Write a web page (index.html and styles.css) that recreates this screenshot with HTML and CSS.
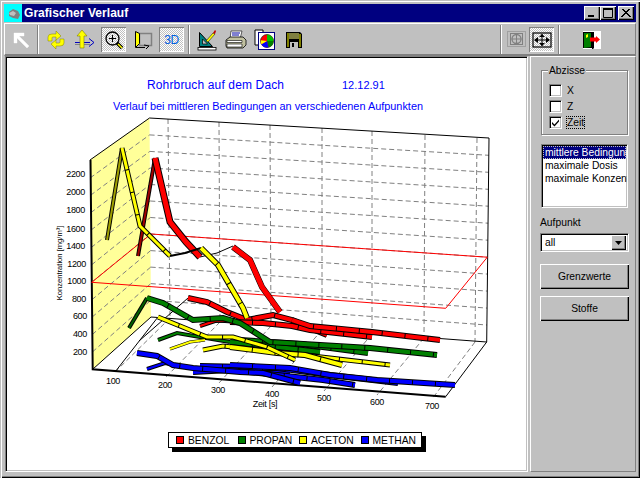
FILE: index.html
```html
<!DOCTYPE html>
<html lang="de">
<head>
<meta charset="utf-8">
<title>Grafischer Verlauf</title>
<link rel="stylesheet" href="styles.css">
</head>
<body>
<div class="window">
  <div class="titlebar">
    <svg class="appicon" width="18" height="18" viewBox="0 0 18 18"><rect width="18" height="18" fill="#00ffff"/><path d="M5 8l4-3 5 2 2 4-2 4-5-1-4-2z" fill="#808080"/><path d="M5 9l4-2 3 2-2 3-4-1z" fill="#c0c0c0"/></svg>
    <span class="title">Grafischer Verlauf</span>
    <div class="controls">
      <span class="ctl"><svg width="14" height="12" viewBox="0 0 14 12"><rect x="3" y="8" width="6" height="2" fill="#000"/></svg></span>
      <span class="ctl"><svg width="14" height="12" viewBox="0 0 14 12"><path d="M2.5 1.500h9v9h-9z" fill="none" stroke="#000"/><rect x="2" y="1" width="10" height="2" fill="#000"/></svg></span>
      <span class="ctl ctl-close"><svg width="14" height="12" viewBox="0 0 14 12"><path d="M3 2l8 8M4 2l8 8M11 2l-8 8M10 2l-8 8" stroke="#000" stroke-width="1"/></svg></span>
    </div>
  </div>

  <div class="toolbar">
    <span class="tb"><svg width="20" height="20" viewBox="0 0 20 20"><path d="M3 3h10v3H8l10 10-2 2L6 8v5H3z" fill="#fff" stroke="#fff" stroke-width=".4"/></svg></span>
    <span class="sep"></span>
    <span class="tb"><svg width="20" height="20" viewBox="0 0 20 20"><path d="M2 11V7q0-3 4-3h4V1l5 5-5 4V7H7q-1 0-1 1v3z" fill="#ffff00" stroke="#808000" stroke-width=".5"/><path d="M18 9v4q0 3-4 3h-4v3l-5-5 5-4v3h3q1 0 1-1V9z" fill="#ffff00" stroke="#808000" stroke-width=".5"/></svg></span>
    <span class="tb"><svg width="22" height="22" viewBox="0 0 22 22"><path d="M1 13.500h15M15 9.500l5 4-5 4" fill="none" stroke="#0000c0"/><path d="M1 15.500h15" stroke="#808080"/><path d="M8 1l5 6h-3v12H6V7H3z" fill="#ffff00" stroke="#808000" stroke-width=".6"/></svg></span>
    <span class="tb tb-on"><svg width="20" height="20" viewBox="0 0 20 20"><circle cx="8.500" cy="8.500" r="6.500" fill="none" stroke="#000" stroke-width="1.300"/><path d="M8.500 5v7M5 8.500h7" stroke="#000"/><path d="M13 13l5 5" stroke="#000" stroke-width="3.500"/><path d="M14 14l4 4" stroke="#ffff00" stroke-width="1.500"/></svg></span>
    <span class="tb"><svg width="20" height="20" viewBox="0 0 20 20"><path d="M6.500 3.500h12v12h-12z" fill="none" stroke="#808080" stroke-width="1.500"/><path d="M2.500 1.500l4 2v10l-4 4z" fill="#ffff00" stroke="#000"/><path d="M3 17.500h9" stroke="#000"/><path d="M11 15l5 1-3 3" fill="none" stroke="#000"/></svg></span>
    <span class="tb tb-on"><span class="three">3D</span></span>
    <span class="sep"></span>
    <span class="tb"><svg width="20" height="22" viewBox="0 0 20 22"><path d="M2.500 3.500v14h13z" fill="#008080" stroke="#000"/><path d="M5.500 10v5h5z" fill="#c0c0c0" stroke="#000" stroke-width=".7"/><path d="M9 12l7-8 2 1-7 8z" fill="#ffff00" stroke="#000" stroke-width=".5"/><path d="M16 4l2-3 1 1-1 3z" fill="#c00000"/><rect x="1" y="18.500" width="18" height="2.500" fill="#fff" stroke="#000" stroke-width=".8"/></svg></span>
    <span class="tb"><svg width="22" height="20" viewBox="0 0 22 20"><path d="M6 1h11l-2 8H5z" fill="#fff" stroke="#000" stroke-width=".6"/><path d="M7 3h8M7 5h7" stroke="#0000a0"/><path d="M1 10l4-3h13l3 3v5l-3 3H2l-1-2z" fill="#c0c0a0" stroke="#000" stroke-width=".8"/><path d="M2 10.500h15v2H2zM2 14h15v3H2z" fill="#fff" stroke="#000" stroke-width=".6"/></svg></span>
    <span class="tb"><svg width="22" height="22" viewBox="0 0 22 22"><path d="M1 1h8v15H1z" fill="#fff" stroke="#000"/><rect x="4.500" y="3.500" width="16" height="17" fill="#fff" stroke="#000080" stroke-width="1"/><circle cx="13" cy="12" r="6.500" fill="#ff0000" stroke="#000" stroke-width=".6"/><path d="M13 12V5.500a6.500 6.500 0 0 1 6.500 6.500z" fill="#00c000"/><path d="M13 12h6.500a6.500 6.500 0 0 1-5 6.300z" fill="#008000"/><path d="M13 12l1.500 6.300a6.500 6.500 0 0 1-7-3z" fill="#0000ff"/><path d="M13 12l-5.500 3.300a6.500 6.500 0 0 1-.8-4z" fill="#ffff00"/></svg></span>
    <span class="tb"><svg width="16" height="16" viewBox="0 0 16 16"><path d="M0 0h14l2 2v14H0z" fill="#000"/><rect x="3" y="1" width="10" height="6" fill="#808040"/><rect x="1" y="1" width="2" height="14" fill="#808000"/><rect x="13" y="2" width="2" height="13" fill="#808000"/><rect x="4" y="10" width="8" height="6" fill="#c0c0c0"/><rect x="6" y="11" width="2" height="4" fill="#000"/></svg></span>
    <span class="toolgap"></span>
    <span class="sep sep-tight"></span>
    <span class="tb tb-tight"><svg width="20" height="18" viewBox="0 0 20 18"><rect x=".5" y=".5" width="18" height="15" fill="none" stroke="#808080" stroke-dasharray="1 1"/><rect x="3.500" y="2.500" width="12" height="11" fill="none" stroke="#808080"/><circle cx="9.500" cy="8" r="4.500" fill="none" stroke="#808080" stroke-width="1.300"/><path d="M9.500 3v10M4.500 8h10" stroke="#808080"/></svg></span>
    <span class="tb tb-on"><svg width="20" height="16" viewBox="0 0 20 16"><rect x="1" y="1" width="18" height="14" fill="none" stroke="#000" stroke-width="1.200"/><path d="M10 2v12M3 8h14" stroke="#000"/><path d="M10 2l-3 3h6zM10 14l-3-3h6zM2 8l4-3v6zM18 8l-4-3v6z" fill="#000"/></svg></span>
    <span class="sep"></span>
    <span class="tb tb-door"><svg width="18" height="18" viewBox="0 0 18 18"><rect width="18" height="18" fill="#fff"/><rect x="0" y="1" width="11" height="16" fill="#000"/><path d="M1 2h7l0 14-7 1z" fill="#008000"/><path d="M3 4l2-1v3l-2 1z" fill="#ffff00"/><rect x="9" y="1" width="1.500" height="17" fill="#000"/><path d="M7 6.500h6V5l4 3.500-4 3.500v-1.500H7z" fill="#ff0000"/></svg></span>
  </div>

  <div class="main">
    <div class="chart">
      <svg class="plot" width="521" height="414" viewBox="7 58 521 414">
        <defs>
          <polyline id="r1" points="155,158 170,222 186,242 200,257"/>
          <polyline id="r1b" points="233,247 250,260 262,287 280,312"/>
          <polyline id="r2" points="188,298 207,302 227,312 247,320 273,315 292,320 310,328 327,335"/>
          <polyline id="r3" points="230,322 263,323 292,326 310,330 372,337"/>
          <polyline id="r4" points="292,320 310,326 372,332 440,340"/>
          <polyline id="r5" points="200,326 215,321 235,320"/>
          <polyline id="g1" points="147,298 163,303 193,320 223,318 240,323 270,342 320,345 370,348 437,355"/>
          <polyline id="g2" points="230,342 270,346 320,352"/>
          <polyline id="g3" points="240,340 300,344 368,353"/>
          <polyline id="g4" points="158,340 177,333 200,337 230,342"/>
          <polyline id="y1" points="122,148 140,226 170,256"/>
          <polyline id="y1b" points="201,248 218,265 243,308 247,318"/>
          <polyline id="y2" points="158,317 207,337 233,337 267,347 295,360"/>
          <polyline id="y3" points="170,349 190,342 205,340"/>
          <polyline id="y4" points="230,347 277,353 305,355 342,365"/>
          <polyline id="y5" points="203,350 223,346 277,352 330,358 390,365"/>
          <polyline id="b1" points="137,353 157,356 173,365 193,368 240,372 263,373 300,383"/>
          <polyline id="b2" points="147,369 165,363 180,366"/>
          <polyline id="b4" points="230,365 290,368 330,375 377,380 455,385"/>
          <polyline id="b5" points="193,372 230,370 277,375 323,380 355,385"/>
          <polyline id="b6" points="240,368 277,368 330,375 398,383"/>
          <polyline id="b7" points="200,366 250,367 290,372"/>
        </defs>

        <polygon class="wall" points="90,160 149.500,118 151,317 92.700,369.300"/>
        <g class="grid">
          <path d="M92.500 351.900L150.900 300.200M92.300 334.500L150.800 283.600M92.100 317.100L150.700 267.100M91.900 299.700L150.600 250.600M91.700 282.300L150.500 234M91.500 264.900L150.400 217.500M91.200 247.500L150.300 201M91 230.100L150.200 184.500M90.800 212.700L150 168M90.500 195.300L149.800 151.400M90.200 177.900L149.600 134.900"/>
          <path d="M150.900 300.200L486.900 325M150.800 283.600L487.100 308.100M150.700 267.100L487.300 291.100M150.600 250.600L487.500 274.100M150.500 234L487.700 257.200M150.400 217.500L487.900 240.200M150.300 201L488.100 223.200M150.200 184.500L488.300 206.200M150 168L488.500 189.300M149.800 151.400L488.700 172.300M149.600 134.900L488.800 155.300"/>
          <path d="M168 119L170 318M219 122L220 322M270 125L271 326M322 128L322 330M372 131L372 334M425 135L424 338M477 138L475 342"/>
          <path d="M170 318L113 374M220 322L165 378M271 326L219 383M322 330L272 387M372 334L324 391M424 338L377 395M475 342L432 399"/>
        </g>
        <g class="edges">
          <path d="M149.500 118L489 138L486.700 342L151 317L92.700 369.300"/>
          <path d="M90 160L149.500 118"/>
          <path d="M486.700 342L445.700 396.700"/>
          <path class="heavy" d="M90.500 160L92.700 369.300L445.700 396.700"/>
        </g>
        <polygon class="limit" points="91.700,282.300 151,234 487.300,257.200 445.700,308.300"/>

        <path class="thinblack" d="M139 341L188 298M200 257L217 253L233 246M115 372L158 317M129 328L147 298"/>
        <polyline class="rise-o" points="138,256 155,158"/>
        <polyline class="rise-r" points="138,256 155,158"/>
        <use href="#r1" class="o7"/><use href="#r1" class="s5 red"/>
        <use href="#r1b" class="o6"/><use href="#r1b" class="s5 red"/>
        <use href="#r5" class="o4"/><use href="#r5" class="s2 red"/>
        <use href="#r2" class="o6"/><use href="#r2" class="s4 red"/>
        <use href="#r3" class="o6"/><use href="#r3" class="s4 red"/>
        <use href="#r4" class="o6"/><use href="#r4" class="s4 red"/>

        <polyline class="rise-o" points="107,240 122,148"/>
        <polyline class="rise-y" points="107,240 122,148"/>
        <use href="#y1" class="o5"/><use href="#y1" class="s3 yellow"/>
        <polyline class="olive" points="170,256 185,253 201,248"/>
        <use href="#y1b" class="o6"/><use href="#y1b" class="s4 yellow"/>

        <polyline class="rise-o" points="129,328 147,298"/>
        <polyline class="rise-g" points="129,328 147,298"/>
        <use href="#g4" class="o4"/><use href="#g4" class="s2 green"/>
        <use href="#g3" class="o6"/><use href="#g3" class="s4 green"/>
        <use href="#g2" class="o6"/><use href="#g2" class="s4 green"/>
        <use href="#g1" class="o6"/><use href="#g1" class="s4 green"/>

        <use href="#y3" class="o3"/><use href="#y3" class="s2 yellow"/>
        <use href="#y5" class="o5"/><use href="#y5" class="s3 yellow"/>
        <use href="#y4" class="o6"/><use href="#y4" class="s4 yellow"/>
        <use href="#y2" class="o5"/><use href="#y2" class="s3 yellow"/>

        <use href="#b2" class="o4"/><use href="#b2" class="s2 blue"/>
        <use href="#b7" class="o6"/><use href="#b7" class="s4 blue"/>
        <use href="#b6" class="o6"/><use href="#b6" class="s4 blue"/>
        <use href="#b5" class="o6"/><use href="#b5" class="s4 blue"/>
        <use href="#b4" class="o6"/><use href="#b4" class="s4 blue"/>
        <use href="#b1" class="o6"/><use href="#b1" class="s4 blue"/>

        <text class="head" x="147" y="89">Rohrbruch auf dem Dach</text>
        <text class="date" x="342" y="89">12.12.91</text>
        <text class="sub" x="113" y="110">Verlauf bei mittleren Bedingungen an verschiedenen Aufpunkten</text>

        <g class="ylab">
          <text x="85" y="177">2200</text><text x="85" y="195">2000</text><text x="85" y="213">1800</text><text x="85" y="232">1600</text><text x="85" y="249">1400</text><text x="86" y="267">1200</text><text x="86" y="284">1000</text><text x="86" y="302">800</text><text x="87" y="319">600</text><text x="87" y="337">400</text><text x="87" y="355">200</text>
        </g>
        <g class="xlab">
          <text x="113" y="384">100</text><text x="165" y="388">200</text><text x="218" y="393">300</text><text x="272" y="397">400</text><text x="324" y="401">500</text><text x="377" y="405">600</text><text x="432" y="409">700</text>
          <text x="265" y="407">Zeit [s]</text>
        </g>
        <text class="ytitle" transform="translate(62 263) rotate(-90)">Konzentration [mg/m³]</text>
      </svg>
      <div class="legend">
        <span class="swatch sw-red"></span><span class="lg">BENZOL</span>
        <span class="swatch sw-green"></span><span class="lg">PROPAN</span>
        <span class="swatch sw-yellow"></span><span class="lg">ACETON</span>
        <span class="swatch sw-blue"></span><span class="lg">METHAN</span>
      </div>
    </div>

    <aside class="side">
      <div class="group">
        <span class="group-label">Abzisse</span>
        <div class="check"><span class="box"></span><span>X</span></div>
        <div class="check"><span class="box"></span><span>Z</span></div>
        <div class="check"><span class="box"><svg width="9" height="9" viewBox="0 0 9 9"><path d="M1 4l2.500 2.500L8 1.500v2L3.500 8.500 1 6z" fill="#000"/></svg></span><span class="focus">Zeit</span></div>
      </div>
      <div class="list">
        <div class="row row-on">mittlere Bedingungen</div>
        <div class="row">maximale Dosis</div>
        <div class="row">maximale Konzentration</div>
      </div>
      <div class="label">Aufpunkt</div>
      <div class="combo"><span class="combo-text">all</span><span class="combo-btn"><svg width="7" height="4" viewBox="0 0 7 4"><path d="M0 0h7L3.500 4z" fill="#000"/></svg></span></div>
      <div class="btn btn-first">Grenzwerte</div>
      <div class="btn">Stoffe</div>
    </aside>
  </div>
</div>
</body>
</html>
```

FILE: styles.css
```css
* { box-sizing: border-box; }
html, body { margin: 0; padding: 0; background: #c0c0c0; }
body { font-family: "Liberation Sans", Arial, sans-serif; font-size: 10.300px; color: #000; }

.window {
  width: 640px;
  height: 478px;
  padding: 4px 4px 0;
  display: flex;
  flex-direction: column;
  background: #c0c0c0;
  box-shadow: inset 1px 1px 0 #c0c0c0, inset 2px 2px 0 #fff, inset -1px -1px 0 #000, inset -2px -2px 0 #808080;
  overflow: hidden;
}

.titlebar {
  height: 18px;
  flex: none;
  display: flex;
  align-items: center;
  background: #000080;
  color: #fff;
}
.appicon { flex: none; }
.title { margin-left: 2px; font-weight: 700; font-size: 12px; letter-spacing: 0.05px; }
.controls { margin-left: auto; margin-right: 2px; display: flex; }
.ctl {
  width: 16px;
  height: 14px;
  display: flex;
  align-items: center;
  justify-content: center;
  background: #c0c0c0;
  box-shadow: inset 1px 1px 0 #fff, inset -1px -1px 0 #000, inset -2px -2px 0 #808080;
}
.ctl-close { margin-left: 2px; }

.toolbar {
  height: 33px;
  flex: none;
  margin-top: 1px;
  padding: 3px 0 0 3px;
  display: flex;
  align-items: flex-start;
  border-top: 1px solid #fff;
  border-left: 1px solid #fff;
  border-bottom: 2px solid #808080;
  border-right: 1px solid #808080;
}
.tb {
  width: 25px;
  height: 25px;
  margin-right: 4px;
  flex: none;
  display: flex;
  align-items: center;
  justify-content: center;
}
.tb-tight { margin-right: 0; }
.tb-on {
  background: repeating-conic-gradient(#fff 0 25%, #c0c0c0 0 50%) 0 0 / 2px 2px;
  box-shadow: inset 1px 1px 0 #808080, inset -1px -1px 0 #fff;
}
.sep {
  width: 2px;
  height: 29px;
  margin: -2px 4px 0 0;
  flex: none;
  background: linear-gradient(90deg, #808080 50%, #fff 50%);
}
.sep-tight { margin-right: 2px; }
.toolgap { width: 190px; flex: none; }
.tb-door { margin-left: 15px; }
.three { color: #0060e0; font-size: 12px; letter-spacing: -0.3px; }

.main { flex: 1; min-height: 0; display: flex; margin-bottom: 6px; padding-left: 1px; }

.chart {
  position: relative;
  width: 523px;
  flex: none;
  background: #fff;
  border: 1px solid;
  border-color: #808080 #fff #fff #808080;
  box-shadow: inset 1px 1px 0 #000, inset -1px -1px 0 #c0c0c0;
  padding: 1px;
  overflow: hidden;
}
.plot { display: block; }

.wall { fill: #ffff99; }
.grid path { fill: none; stroke: #808080; stroke-width: 1; stroke-dasharray: 5 3; }
.edges path { fill: none; stroke: #000; stroke-width: 1; }
.edges .heavy { stroke-width: 2; }
.limit { fill: none; stroke: #ff0000; stroke-width: 1; }
.thinblack { fill: none; stroke: #000; stroke-width: 1; }

.plot polyline { fill: none; stroke-linejoin: miter; }
.o3 { stroke: #000; stroke-width: 3; fill: none; }
.o4 { stroke: #000; stroke-width: 4; fill: none; }
.o5 { stroke: #000; stroke-width: 5; fill: none; }
.o6 { stroke: #000; stroke-width: 6; fill: none; }
.o7 { stroke: #000; stroke-width: 7; fill: none; }
.s2 { stroke-width: 2; fill: none; }
.s3 { stroke-width: 3; fill: none; stroke-dasharray: 22 1; }
.s4 { stroke-width: 4; fill: none; stroke-dasharray: 22 1; }
.s5 { stroke-width: 5; fill: none; }
.red { stroke: #ff0000; }
.green { stroke: #008000; }
.yellow { stroke: #ffff00; }
.blue { stroke: #0000ff; }
.plot .rise-o { stroke: #000; stroke-width: 4; }
.plot .rise-r { stroke: #a00000; stroke-width: 2; }
.plot .rise-y { stroke: #a0a000; stroke-width: 2; }
.plot .rise-g { stroke: #006000; stroke-width: 2; }
.plot .olive { stroke: #000; stroke-width: 2; }

.plot text { font-family: "Liberation Sans", Arial, sans-serif; }
.head { fill: #0000ff; font-size: 12px; letter-spacing: 0.14px; }
.date { fill: #0000ff; font-size: 11px; }
.sub { fill: #0000ff; font-size: 10.900px; }
.ylab text { font-size: 9px; text-anchor: end; letter-spacing: -0.3px; }
.xlab text { font-size: 9px; text-anchor: middle; letter-spacing: -0.3px; }
.ytitle { font-size: 7.600px; text-anchor: middle; }

.legend {
  position: absolute;
  left: 162px;
  top: 375px;
  width: 254px;
  height: 16px;
  padding-left: 7px;
  display: flex;
  align-items: center;
  background: #fff;
  border: 1px solid #000;
  box-shadow: 4px 4px 0 #000;
}
.swatch { width: 8px; height: 8px; margin-right: 4px; flex: none; border: 1px solid #000; }
.lg { width: 49.500px; flex: none; }
.sw-red { background: #ff0000; }
.sw-green { background: #008000; }
.sw-yellow { background: #ffff00; }
.sw-blue { background: #0000ff; }

.side {
  width: 106px;
  flex: none;
  margin-left: 2px;
  padding: 13px 6px 0 9px;
  display: flex;
  flex-direction: column;
  border-top: 1px solid #fff;
  border-left: 1px solid #fff;
  border-right: 1px solid #808080;
  border-bottom: 1px solid #808080;
}
.group {
  position: relative;
  width: 87px;
  height: 65px;
  margin-left: 1px;
  padding: 11px 0 0 7px;
  flex: none;
  border: 1px solid #808080;
  box-shadow: 1px 1px 0 #fff, inset 1px 1px 0 #fff;
}
.group-label { position: absolute; left: 6px; top: -6px; padding: 0 1px; background: #c0c0c0; line-height: 12px; }
.check { height: 16px; display: flex; align-items: center; gap: 5px; }
.box {
  width: 13px;
  height: 13px;
  display: flex;
  align-items: center;
  justify-content: center;
  background: #fff;
  border: 1px solid;
  border-color: #808080 #fff #fff #808080;
  box-shadow: inset 1px 1px 0 #000, inset -1px -1px 0 #c0c0c0;
  flex: none;
}
.focus { outline: 1px dotted #000; outline-offset: 0; }

.list {
  width: 87px;
  height: 64px;
  margin: 9px 0 0 1px;
  padding: 1px;
  flex: none;
  overflow: hidden;
  background: #fff;
  border: 1px solid;
  border-color: #808080 #fff #fff #808080;
  box-shadow: inset 1px 1px 0 #000, inset -1px -1px 0 #c0c0c0;
}
.row { height: 13px; line-height: 13px; padding-left: 2px; white-space: nowrap; }
.row-on { background: #000080; color: #fff; outline: 1px dotted #c0c0c0; outline-offset: -1px; }

.label { margin-top: 9px; height: 12px; line-height: 12px; }
.combo {
  height: 19px;
  margin-top: 4px;
  display: flex;
  align-items: center;
  background: #fff;
  border: 1px solid;
  border-color: #808080 #fff #fff #808080;
  box-shadow: inset 1px 1px 0 #000, inset -1px -1px 0 #c0c0c0;
  padding: 2px;
}
.combo-text { flex: 1; padding-left: 2px; }
.combo-btn {
  width: 15px;
  height: 15px;
  display: flex;
  align-items: center;
  justify-content: center;
  background: #c0c0c0;
  box-shadow: inset 1px 1px 0 #fff, inset -1px -1px 0 #000, inset -2px -2px 0 #808080;
}
.btn {
  height: 25px;
  margin-top: 7px;
  display: flex;
  align-items: center;
  justify-content: center;
  background: #c0c0c0;
  box-shadow: inset 1px 1px 0 #fff, inset -1px -1px 0 #000, inset -2px -2px 0 #808080;
}
.btn-first { margin-top: 12px; }
```
